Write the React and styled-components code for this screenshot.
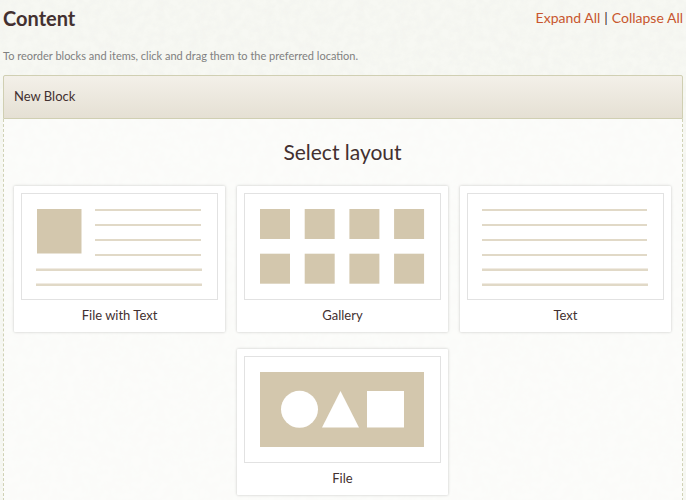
import React from "react";
import styled, { createGlobalStyle } from "styled-components";

const paper = `url("data:image/svg+xml,%3Csvg xmlns='http://www.w3.org/2000/svg' width='200' height='200'%3E%3Cfilter id='n'%3E%3CfeTurbulence type='fractalNoise' baseFrequency='0.12' numOctaves='3' stitchTiles='stitch'/%3E%3CfeColorMatrix values='0 0 0 0 0.6 0 0 0 0 0.62 0 0 0 0 0.55 0.16 0 0 0 -0.05'/%3E%3C/filter%3E%3Crect width='200' height='200' filter='url(%23n)'/%3E%3C/svg%3E")`;

const GlobalStyle = createGlobalStyle`
  *, *::before, *::after { box-sizing: border-box; }
  body {
    margin: 0;
    background: #f7f8f3 ${paper};
    color: #433030;
    font-family: Lato, "Open Sans", sans-serif;
    font-size: 13px;
    line-height: 20px;
  }
`;

const Page = styled.main`
  padding: 4px 3px 0;
`;

const Header = styled.header`
  display: flex;
  justify-content: space-between;
  align-items: center;
  height: 28px;
`;

const Title = styled.h1`
  margin: 0;
  font-size: 20px;
  line-height: 28px;
  font-weight: 700;
`;

const Actions = styled.nav`
  display: flex;
  gap: 4px;
  font-size: 14px;
`;

const ActionLink = styled.a`
  color: #c8562e;
  text-decoration: none;
`;

const Hint = styled.p`
  margin: 14px 0 9px;
  color: #808080;
  font-size: 11px;
  line-height: 20px;
`;

const BlockHeader = styled.h2`
  margin: 0;
  padding: 10px 10px 12px;
  border: 1px solid #d0cfb2;
  border-radius: 2px 2px 0 0;
  background: linear-gradient(#f3f0e9, #e5e0d4);
  font-size: 13px;
  line-height: 20px;
  font-weight: 400;
`;

const BlockBody = styled.section`
  padding: 20px 11px 16px 10px;
  border: 1px dashed #d0d2b5;
  border-width: 0 1px;
  background: rgba(255, 255, 255, 0.6);
`;

const PickerTitle = styled.h3`
  margin: 0 0 21px;
  font-size: 21px;
  line-height: 26px;
  font-weight: 400;
  text-align: center;
`;

const Layouts = styled.div`
  display: flex;
  flex-wrap: wrap;
  justify-content: center;
  gap: 17px 12px;
`;

const LayoutCard = styled.button`
  flex: 0 0 calc((100% - 24px) / 3);
  padding: 7px;
  border: 0;
  border-radius: 1px;
  background: #fff;
  box-shadow: 0 0 3px rgba(0, 0, 0, 0.22);
  color: inherit;
  font: inherit;
  cursor: pointer;
`;

const Preview = styled.svg`
  display: block;
  width: 100%;
  margin-bottom: 5px;
  border: 1px solid #e2e2e2;
`;

const CardLabel = styled.span`
  display: block;
  line-height: 20px;
`;

const TAN = "#d3c7ad";
const LINE = "#e1d9c7";
const rows = [15, 30, 45, 60, 75, 90];

function FileWithTextArt() {
  return (
    <>
      <rect x="15" y="15" width="44.5" height="44.5" fill={TAN} />
      {rows.map((y, i) => (
        <rect key={y} x={i < 4 ? 73 : 14} y={y - (i > 3 ? 0.5 : 0)} width={i < 4 ? 106 : 166} height={i > 3 ? 2.5 : 2} fill={LINE} />
      ))}
    </>
  );
}

function GalleryArt() {
  return [15, 59.7].map((y) =>
    [15, 59.7, 104.4, 149.1].map((x) => (
      <rect key={`${x}-${y}`} x={x} y={y} width="30" height="30" fill={TAN} />
    ))
  );
}

function TextArt() {
  return rows.map((y, i) => (
    <rect key={y} x="14" y={y - (i > 3 ? 0.5 : 0)} width={i > 3 ? 166 : 165} height={i > 3 ? 2.5 : 2} fill={LINE} />
  ));
}

function FileArt() {
  return (
    <>
      <rect x="15" y="15" width="164" height="75" fill={TAN} />
      <circle cx="54.5" cy="52.3" r="18.5" fill="#fff" />
      <path d="M95.5 34 L114 70.5 H77 Z" fill="#fff" />
      <rect x="122" y="34" width="37" height="36.5" fill="#fff" />
    </>
  );
}

const layouts = [
  { name: "File with Text", Art: FileWithTextArt },
  { name: "Gallery", Art: GalleryArt },
  { name: "Text", Art: TextArt },
  { name: "File", Art: FileArt },
];

export default function App() {
  return (
    <>
      <GlobalStyle />
      <Page>
        <Header>
          <Title>Content</Title>
          <Actions aria-label="Blocks">
            <ActionLink href="#expand">Expand All</ActionLink>
            <span>|</span>
            <ActionLink href="#collapse">Collapse All</ActionLink>
          </Actions>
        </Header>
        <Hint>To reorder blocks and items, click and drag them to the preferred location.</Hint>
        <BlockHeader>New Block</BlockHeader>
        <BlockBody>
          <PickerTitle>Select layout</PickerTitle>
          <Layouts>
            {layouts.map(({ name, Art }) => (
              <LayoutCard key={name} type="button">
                <Preview viewBox="0 0 195 105" aria-hidden="true">
                  <Art />
                </Preview>
                <CardLabel>{name}</CardLabel>
              </LayoutCard>
            ))}
          </Layouts>
        </BlockBody>
      </Page>
    </>
  );
}
